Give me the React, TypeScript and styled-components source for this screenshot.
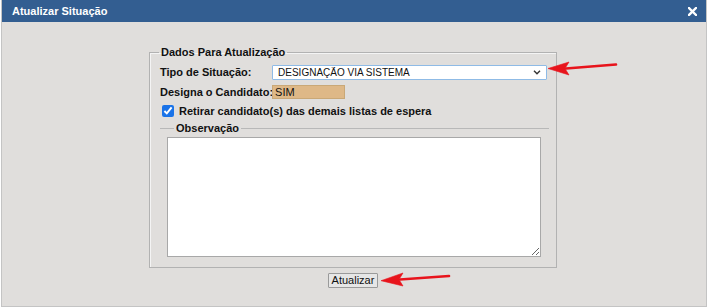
import styled, { createGlobalStyle } from 'styled-components';

const GlobalStyle = createGlobalStyle`
  body {
    margin: 0;
    background: #ffffff;
    font-family: 'Liberation Sans', Arial, sans-serif;
  }
`;

const Dialog = styled.div`
  position: relative;
  box-sizing: border-box;
  width: 706px;
  height: 307px;
  margin-left: 1px;
  border: 1px solid #c4c4c4;
  border-top: none;
  background: #e0dedc;
`;

const Header = styled.div`
  height: 22px;
  display: flex;
  align-items: center;
  justify-content: space-between;
  padding: 0 9px 0 10px;
  background: #335e91;
  color: #ffffff;
`;

const Title = styled.span`
  font-size: 11px;
  font-weight: 700;
`;

const Body = styled.div`
  display: flex;
  flex-direction: column;
  align-items: center;
  padding: 23px 2px 0 0;
`;

const Fieldset = styled.fieldset`
  box-sizing: border-box;
  width: 408px;
  margin: 0;
  padding: 6px 9px 10px 10px;
  border: 1px solid #b2b2b2;
  box-shadow: inset 1px 1px 0 #f4f4f4;
`;

const Legend = styled.legend`
  padding: 0 2px;
  margin-left: -1px;
  font-size: 11px;
  line-height: 14px;
  font-weight: 700;
  color: #111111;
`;

const Grid = styled.div`
  display: grid;
  grid-template-columns: auto 1fr;
  column-gap: 1px;
  row-gap: 5px;
  align-items: center;
`;

const Label = styled.span`
  font-size: 11px;
  line-height: 13px;
  font-weight: 700;
  color: #111111;
  white-space: nowrap;
`;

const SelectBox = styled.div`
  position: relative;
  display: flex;
  height: 15px;
  margin-left: -2px;
`;

const Select = styled.select`
  box-sizing: border-box;
  appearance: none;
  width: 100%;
  height: 15px;
  padding: 0 0 0 5px;
  border: 1px solid #8fbbe6;
  border-radius: 1px;
  background: #ffffff;
  font-family: 'Liberation Sans', Arial, sans-serif;
  font-size: 10px;
  color: #111111;
  outline: none;
`;

const Chevron = styled.svg`
  position: absolute;
  right: 6px;
  top: 5px;
  pointer-events: none;
`;

const InputCell = styled.div`
  display: flex;
  height: 14px;
`;

const TextInput = styled.input`
  box-sizing: border-box;
  width: 73px;
  height: 14px;
  padding: 0 0 0 2px;
  margin-left: -2px;
  border: 1px solid #c9a877;
  background: #deb887;
  font-family: 'Liberation Sans', Arial, sans-serif;
  font-size: 11px;
  color: #111111;
`;

const CheckRow = styled.label`
  display: flex;
  align-items: center;
  height: 17px;
  margin-top: 3px;
  font-size: 11px;
  font-weight: 700;
  color: #111111;
`;

const Check = styled.input`
  width: 12px;
  height: 12px;
  margin: 0 5px 0 2px;
  accent-color: #1a73e8;
`;

const SubFieldset = styled.fieldset`
  margin: 2px -2px 0 0;
  padding: 2px 8px 0 7px;
  border: none;
  border-top: 1px solid #b8b8b8;
`;

const SubLegend = styled(Legend)`
  margin-left: 7px;
`;

const TextArea = styled.textarea`
  display: block;
  box-sizing: border-box;
  width: 100%;
  height: 120px;
  border: 1px solid #a8a8a8;
  background: #ffffff;
  resize: both;
`;

const Button = styled.button`
  box-sizing: border-box;
  width: 50px;
  height: 15px;
  margin-top: 5px;
  padding: 0;
  border: 1px solid #9a9a9a;
  border-radius: 1px;
  background: #e6e6e6;
  font-family: 'Liberation Sans', Arial, sans-serif;
  font-size: 11px;
  line-height: 13px;
  color: #111111;
`;

const Arrows = styled.svg`
  position: absolute;
  left: -1px;
  top: 0;
  pointer-events: none;
`;

const CloseIcon = () => (
  <svg width="9" height="9" viewBox="0 0 9 9">
    <path d="M1 1 L8 8 M8 1 L1 8" stroke="#ffffff" strokeWidth="2.4" strokeLinecap="square" />
  </svg>
);

const Arrow = ({ tip, back, tail }: { tip: [number, number]; back: [number, number]; tail: [number, number] }) => (
  <g fill="#e8141c" stroke="#e8141c">
    <path d={`M${tail[0]} ${tail[1]} L${back[0] - 3} ${back[1]}`} strokeWidth="2.6" strokeLinecap="round" />
    <path
      d={`M${tip[0]} ${tip[1]} L${back[0]} ${back[1] - 6.5} L${back[0] - 4} ${back[1]} L${back[0]} ${back[1] + 6.5} Z`}
      strokeWidth="0.6"
    />
  </g>
);

export default function App() {
  return (
    <>
      <GlobalStyle />
      <Dialog>
        <Header>
          <Title>Atualizar Situação</Title>
          <CloseIcon />
        </Header>
        <Body>
          <Fieldset>
            <Legend>Dados Para Atualização</Legend>
            <Grid>
              <Label>Tipo de Situação:</Label>
              <SelectBox>
                <Select defaultValue="designacao">
                  <option value="designacao">DESIGNAÇÃO VIA SISTEMA</option>
                </Select>
                <Chevron width="8" height="5" viewBox="0 0 8 5">
                  <path d="M1 0.8 L4 3.8 L7 0.8" fill="none" stroke="#333333" strokeWidth="1.4" />
                </Chevron>
              </SelectBox>
              <Label>Designa o Candidato:</Label>
              <InputCell>
                <TextInput defaultValue="SIM" readOnly />
              </InputCell>
            </Grid>
            <CheckRow>
              <Check type="checkbox" defaultChecked />
              Retirar candidato(s) das demais listas de espera
            </CheckRow>
            <SubFieldset>
              <SubLegend>Observação</SubLegend>
              <TextArea />
            </SubFieldset>
          </Fieldset>
          <Button>Atualizar</Button>
        </Body>
        <Arrows width="710" height="308" viewBox="0 0 710 308">
          <Arrow tip={[547, 68.5]} back={[568, 68.5]} tail={[615, 64.5]} />
          <Arrow tip={[380, 280.7]} back={[402, 279.5]} tail={[448, 276]} />
        </Arrows>
      </Dialog>
    </>
  );
}
